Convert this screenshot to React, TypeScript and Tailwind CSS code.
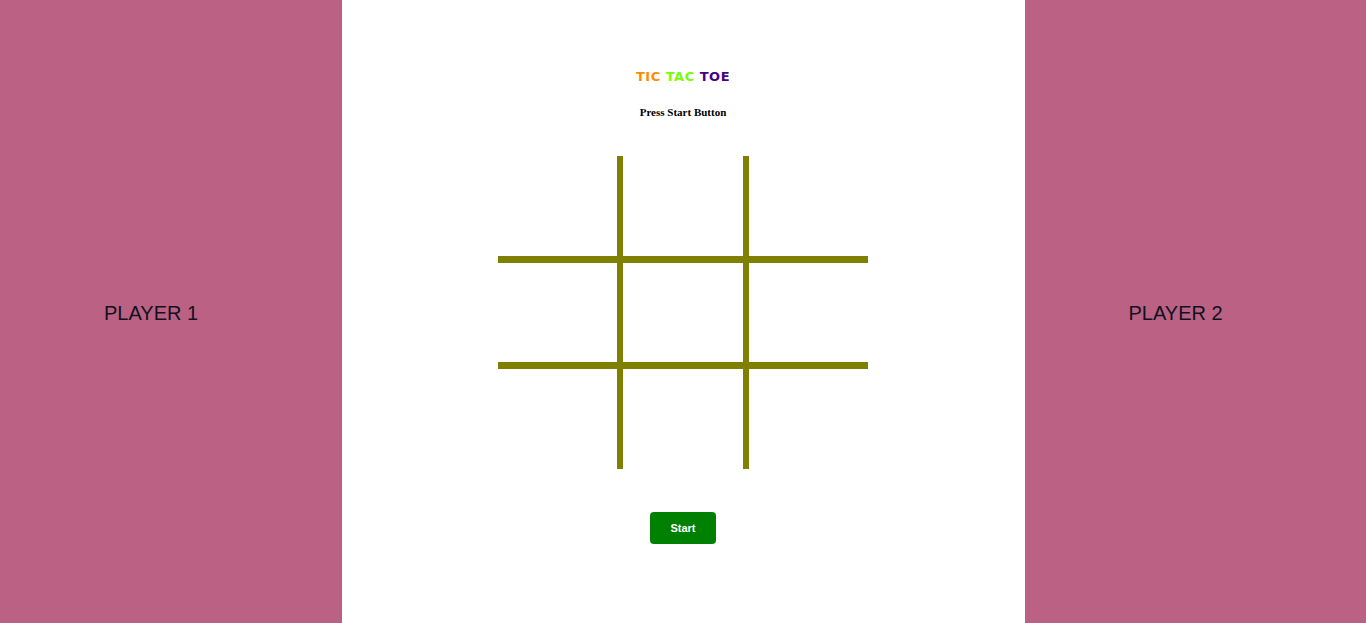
export default function App() {
  const cells = [
    'border-b-[7px]',
    'border-b-[7px] border-x-[6px]',
    'border-b-[7px]',
    'border-b-[7px]',
    'border-b-[7px] border-x-[6px]',
    'border-b-[7px]',
    '',
    'border-x-[6px]',
    '',
  ];

  return (
    <div className="flex h-[623px] w-full font-['Liberation_Sans',Arial,sans-serif]">
      <div className="flex w-1/4 items-center bg-[#bb6183] pl-[104px] pt-[3px]">
        <span className="text-[20px] text-[#111122]">PLAYER 1</span>
      </div>

      <div className="flex w-1/2 flex-col items-center bg-white pt-[69px]">
        <h1 className="font-['DejaVu_Sans',Verdana,sans-serif] text-[13px] font-bold leading-[16px] tracking-[0.5px]">
          <span className="text-[#ff8c00]">TIC</span>{' '}
          <span className="text-[#7cfc00]">TAC</span>{' '}
          <span className="text-[#4b0082]">TOE</span>
        </h1>
        <p className="mt-[20px] font-['Liberation_Serif','Times_New_Roman',serif] text-[11px] font-bold leading-[14px] text-black">
          Press Start Button
        </p>

        <div className="mt-[37px] grid grid-cols-[119px_132px_119px] grid-rows-[107px_106px_100px]">
          {cells.map((c, i) => (
            <div key={i} className={`border-[#808000] ${c}`} />
          ))}
        </div>

        <button className="mt-[43px] h-[32px] w-[66px] rounded-[4px] bg-[#008000] text-[11px] font-bold text-white">
          Start
        </button>
      </div>

      <div className="flex w-1/4 items-center bg-[#bb6183] pl-[104px] pt-[3px]">
        <span className="text-[20px] text-[#111122]">PLAYER 2</span>
      </div>
    </div>
  );
}
